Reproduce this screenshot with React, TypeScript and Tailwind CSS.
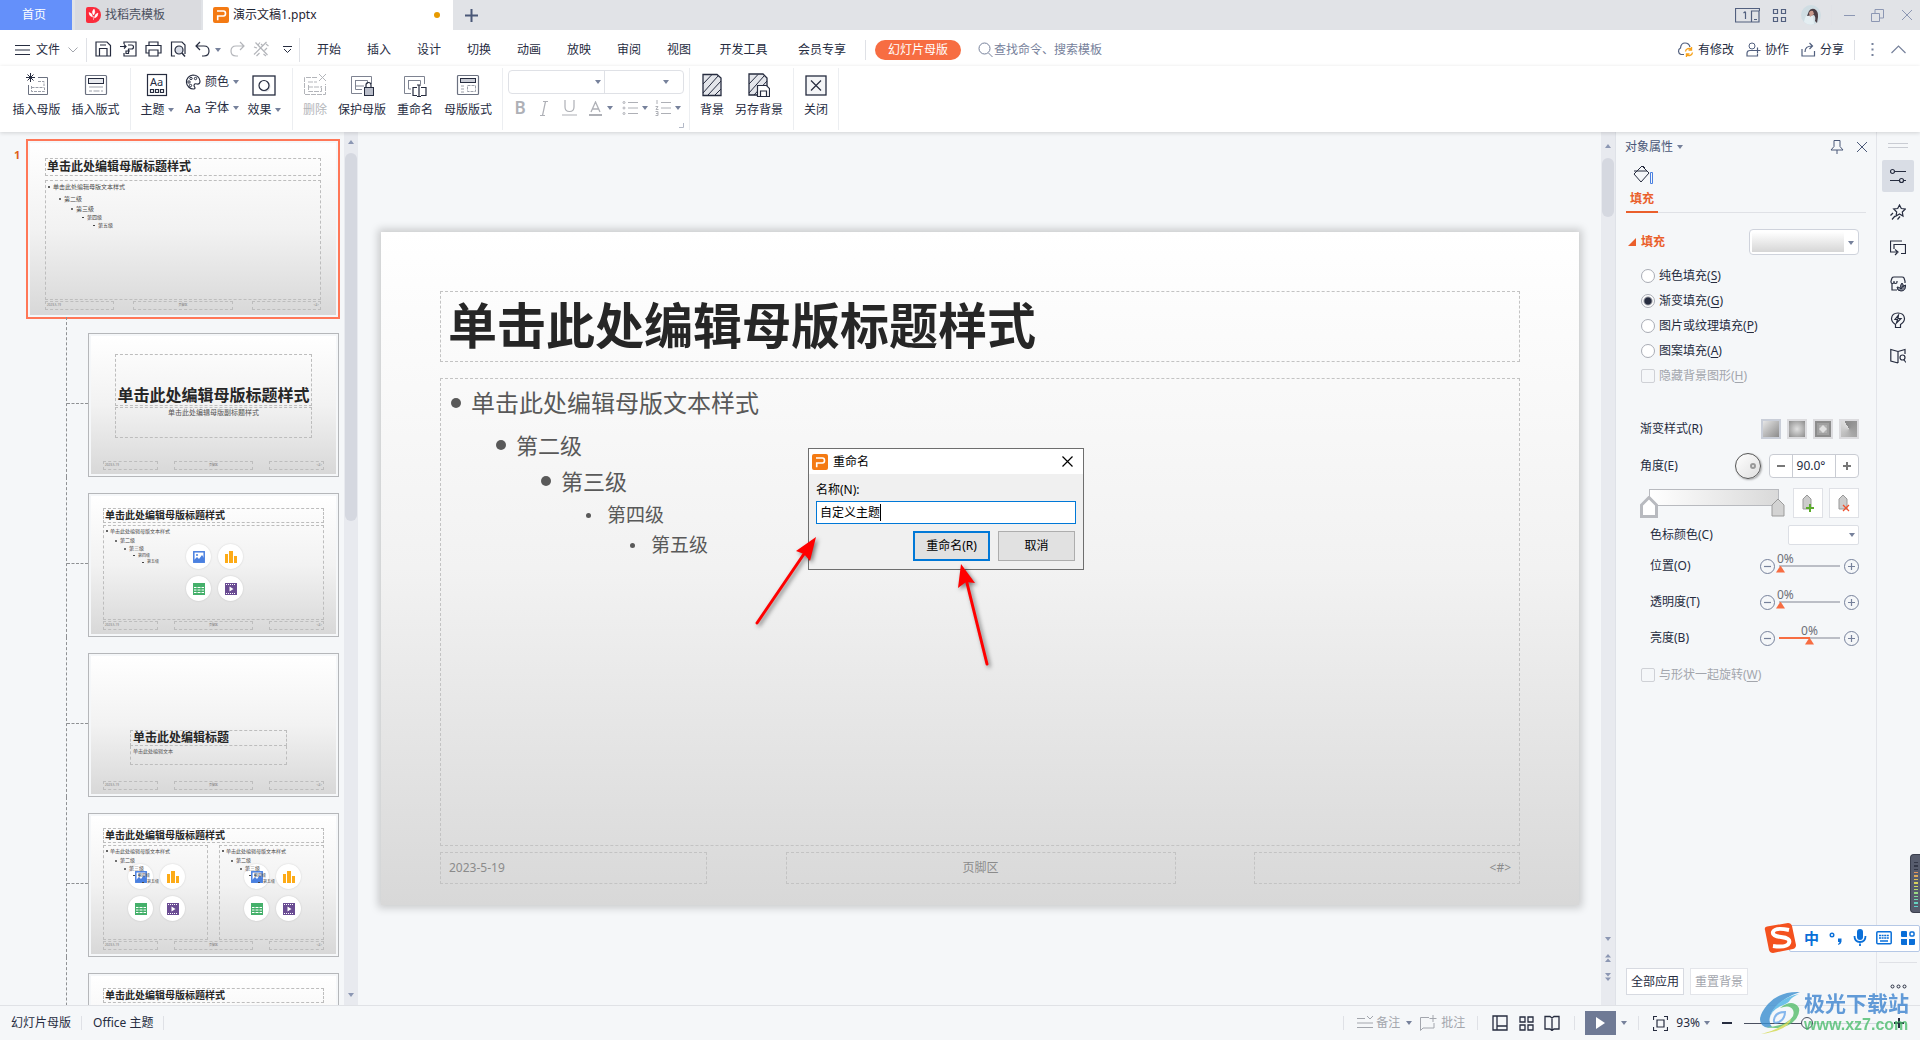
import React, { useState } from 'react';
import clsx from 'clsx';

type IcoProps = { w?: number; h?: number; className?: string; children: React.ReactNode };

function Ico({ w = 16, h = w, className, children }: IcoProps) {
  return (
    <svg width={w} height={h} viewBox={`0 0 ${w} ${h}`} fill="none" stroke="currentColor" className={clsx('shrink-0', className)} aria-hidden="true">
      {children}
    </svg>
  );
}

function Caret({ className = 'text-[#76819b]' }: { className?: string }) {
  return (
    <Ico w={6} h={4} className={className}>
      <path d="M0 0h6L3 4z" fill="currentColor" stroke="none" />
    </Ico>
  );
}

function Sep({ className }: { className?: string }) {
  return <div className={clsx('w-px shrink-0 bg-[#dfe1e6]', className)} />;
}

function WpsLogo() {
  return (
    <Ico className="text-white">
      <rect width="16" height="16" rx="2" fill="#f47a13" stroke="none" />
      <path d="M4 4h6.500Q12.500 4 12.500 6.500T10.500 9H4.700v4.200" strokeWidth="1.600" />
    </Ico>
  );
}

/* ---------- title bar ---------- */

function TitleBar() {
  return (
    <header className="flex h-[30px] shrink-0 items-center bg-[#e1e3e7]">
      <button className="h-full w-[72px] bg-[#6490fa] pr-1 text-white">首页</button>
      <button className="ml-[3px] flex h-full w-[126px] items-center gap-1 bg-[#dadbdf] pl-[11px] text-[#4b5060]">
        <Ico w={15} h={16}>
          <path d="M0 2q0-2 2-2h5a8 8 0 0 1 0 16H2q-2 0-2-2z" fill="#fb2c3c" stroke="none" />
          <path d="M7.500 13V9M7.500 8Q5 5 8 2q2 3-.5 6M6.500 10Q3 9 3 5.500 6.500 6 6.500 10M8.500 11Q8.500 7 12 6q0 4-3.500 5" fill="#fff" stroke="#fff" strokeWidth=".5" />
        </Ico>
        找稻壳模板
      </button>
      <button className="ml-[2px] flex h-full w-[250px] items-center gap-1 bg-white pr-[13px] pl-[10px] text-[#1f2533]">
        <WpsLogo />
        演示文稿1.pptx
        <span className="ml-auto h-[6px] w-[6px] rounded-full bg-[#e79a00]" />
      </button>
      <button className="ml-3 text-[#4a5878]" aria-label="新建">
        <Ico w={13}><path d="M6.500 0v13M0 6.500h13" strokeWidth="2" /></Ico>
      </button>
      <div className="ml-auto flex h-full items-center pr-[7px] text-[#52607f]">
        <button aria-label="窗口布局">
          <Ico w={25} h={15}>
            <path d="M16 14H.5V.5h24V3M10.500 4v7M8.500 5l2-1.500M24 3h-7.500v11H24z" strokeWidth="1.200" />
            <path d="M19 11.500h3" />
          </Ico>
        </button>
        <button className="ml-3" aria-label="应用">
          <Ico w={15}><path d="M1.500 1.500h4v4h-4zM9.500 1.500h4v4h-4zM1.500 9.500h4v4h-4zM9.500 9.500h4v4h-4z" strokeWidth="1.200" /></Ico>
        </button>
        <button className="ml-[14px]" aria-label="账户">
          <Ico w={20}>
            <circle cx="10" cy="10" r="10" fill="#cfdde3" stroke="none" />
            <path d="M3 17q1-7 5-8l4 2 1 8a10 10 0 0 1-10-2" fill="#e4eef2" stroke="none" />
            <path d="M8 6q2-3 5.500-2 4 2 3.500 8l-1 6-2-2q1-4-1-6L6 11z" fill="#4a3d43" stroke="none" />
            <path d="M8 8q1-3 4-2l1 3-4 3z" fill="#c99a8c" stroke="none" />
          </Ico>
        </button>
        <Sep className="mr-[12px] ml-[10px] h-5 bg-[#c8ccd5]" />
        <button className="text-[#8c97b3]" aria-label="最小化"><Ico w={11}><path d="M0 5.500h11" /></Ico></button>
        <button className="ml-4 text-[#8c97b3]" aria-label="还原">
          <Ico w={13}><path d="M.5 4.500h8v8h-8zM4 4V.5h8.500V9H9" /></Ico>
        </button>
        <button className="ml-[17px] text-[#8c97b3]" aria-label="关闭窗口"><Ico w={12}><path d="M1 1l10 10M11 1L1 11" /></Ico></button>
      </div>
    </header>
  );
}

/* ---------- menu row ---------- */

const menus = ['开始', '插入', '设计', '切换', '动画', '放映', '审阅', '视图'];

function MenuBar() {
  return (
    <nav className="flex h-9 shrink-0 items-center bg-white pt-[3px] text-[#262c3f]">
      <button className="ml-[15px] flex items-center gap-[6px]">
        <Ico w={15} h={12}><path d="M0 1.500h15M0 6h15M0 10.500h15" /></Ico>
        文件
        <Ico w={10} h={6} className="ml-[2px] text-[#a3a6ad]"><path d="M.5.5L5 5 9.500.5" /></Ico>
      </button>
      <Sep className="ml-2 h-6" />
      <div className="ml-2 flex items-center">
        <button aria-label="保存">
          <Ico w={17}><path d="M1 1h11l3.500 3.500V15H1zM4.500 15V7.500H12V15M5 4h6" strokeWidth="1.200" /></Ico>
        </button>
        <button className="ml-2" aria-label="输出为PDF">
          <Ico w={17}><path d="M4 3V1h12v14H4v-3M0 5.500h6M4 3.500l2 2-2 2M8 4h3.500q2 0 2 2t-2 2H8M8.500 8v4.500H6V10h4" strokeWidth="1.200" /></Ico>
        </button>
        <button className="ml-2" aria-label="打印">
          <Ico w={17}><path d="M4 4V1h9v3M4 12H1V4.500h15V12h-3M4 9h9v6H4z" strokeWidth="1.200" /></Ico>
        </button>
        <button className="ml-2" aria-label="打印预览">
          <Ico w={17}>
            <path d="M5 15H1.500V1H12l3 3v9" strokeWidth="1.200" />
            <circle cx="9" cy="9" r="4" fill="#d8dce6" strokeWidth="1.200" />
            <path d="M12 12l3 3.500" strokeWidth="1.500" />
          </Ico>
        </button>
        <button className="ml-2 flex items-center gap-[5px]" aria-label="撤销">
          <Ico w={15} h={17}><path d="M5 1L1 5l4 4M1 5h8q5 0 5 5t-5 5H7" strokeWidth="1.200" /></Ico>
          <Caret />
        </button>
        <button className="ml-[9px] text-[#b3b5ba]" disabled aria-label="重做">
          <Ico w={15} h={17}><path d="M10 1l4 4-4 4M14 5H6q-5 0-5 5t5 5h2" strokeWidth="1.200" /></Ico>
        </button>
        <button className="ml-2 text-[#b3b5ba]" disabled aria-label="格式刷">
          <Ico w={17}><path d="M2.500 1.500l12 12.500M1 13.500L13.500 1M3.500 15l3-3M14 7l-2.500 2.500M5 4l2-2.500M1 6l3 1M10.500 13l2.500 2M13 3l2.500 2M8 3l2 2" strokeWidth="1.200" /></Ico>
        </button>
        <button className="ml-[13px]" aria-label="更多">
          <Ico w={9} h={8}><path d="M0 .5h9M1 3l3.500 3.500L8 3" /></Ico>
        </button>
      </div>
      <Sep className="mr-1 ml-[7px] h-6" />
      {menus.map((m) => (
        <button key={m} className="w-[50px]">{m}</button>
      ))}
      <button className="w-[79px]">开发工具</button>
      <button className="w-[78px]">会员专享</button>
      <Sep className="ml-1 h-5" />
      <button className="ml-[9px] h-5 w-[86px] rounded-full bg-[#f76d42] text-white">幻灯片母版</button>
      <button className="ml-[17px] flex items-center gap-px text-[#76819b]">
        <Ico w={15}><circle cx="6.500" cy="6.500" r="5.500" /><path d="M10.500 11l4 4" /></Ico>
        查找命令、搜索模板
      </button>
      <div className="ml-auto flex items-center pr-[14px]">
        <button className="flex items-center gap-1">
          <Ico w={17} className="text-[#52607f]">
            <path d="M7 13.500H4A3.500 3.500 0 0 1 3.500 7Q4 2 8 2t5 4" strokeWidth="1.200" />
            <path d="M8.500 10.500a3.500 3.500 0 0 1 6-2M15.500 11.500a3.500 3.500 0 0 1-6 2M14.500 6v3h-3M9.500 16v-3h3" stroke="#f7a21b" strokeWidth="1.400" />
          </Ico>
          有修改
        </button>
        <button className="ml-3 flex items-center gap-1">
          <Ico w={15} className="text-[#52607f]"><circle cx="6" cy="4" r="3" /><path d="M9 8.500H4q-3 0-3 3V14h10.500v-2M11.500 5.500v6M8.500 8.500h6" strokeWidth="1.200" /></Ico>
          协作
        </button>
        <button className="ml-3 flex items-center gap-1">
          <Ico w={15} className="text-[#52607f]"><path d="M1 7v7h12.500V9M4 10q0-6 7-6M8.500 1l3 3-3 3" strokeWidth="1.200" /></Ico>
          分享
        </button>
        <Sep className="ml-[10px] h-5" />
        <button className="ml-4" aria-label="更多选项">
          <Ico w={3} h={13}><path d="M.5 0h2v2h-2zM.5 5.500h2v2h-2zM.5 11h2v2h-2z" fill="#76819b" stroke="none" /></Ico>
        </button>
        <button className="ml-[17px] text-[#76819b]" aria-label="收起功能区"><Ico w={15} h={9}><path d="M.5 8l7-7 7 7" strokeWidth="1.200" /></Ico></button>
      </div>
    </nav>
  );
}

/* ---------- ribbon ---------- */

function RibbonButton({ label, icon, className, caret, disabled }: { label: string; icon: React.ReactNode; className: string; caret?: boolean; disabled?: boolean }) {
  return (
    <button disabled={disabled} className={clsx('flex flex-col items-center gap-[5px] self-start pt-[7px] whitespace-nowrap disabled:text-[#b3b5ba]', className)}>
      <span className="flex h-6 items-center">{icon}</span>
      <span className="flex items-center gap-[3px] leading-4">
        {label}
        {caret && <Caret />}
      </span>
    </button>
  );
}

function Ribbon() {
  return (
    <div className="relative z-10 flex h-[66px] shrink-0 items-center bg-white text-[#262c3f] shadow-[0_1px_4px_rgba(0,0,0,0.15)]">
      <RibbonButton className="ml-[7px] w-[59px]" label="插入母版" icon={
        <Ico w={24}>
          <path d="M13 4.500h9.500v17h-19V12" stroke="#6b7180" />
          <path d="M13 8.500h6V13M6.500 14.500h13M6.500 13v5.500h13V15" stroke="#9b9fa9" strokeDasharray="3 1" />
          <path d="M5.500 0v9M1 4.500h9M2.500 1.500l6 6M8.500 1.500l-6 6" />
        </Ico>} />
      <RibbonButton className="w-[59px]" label="插入版式" icon={
        <Ico w={24}>
          <rect x="1.500" y="2.500" width="21" height="19" rx="1" stroke="#6b7180" strokeWidth="1.200" />
          <rect x="4.500" y="5.500" width="15" height="5" fill="#e7e9ee" />
          <path d="M5 14h14M5 18h3M9.500 18h6M17 18h2" stroke="#9b9fa9" />
        </Ico>} />
      <Sep className="ml-[5px] h-[62px] bg-[#eceef1]" />
      <RibbonButton className="ml-1 w-[44px]" label="主题" caret icon={
        <Ico w={22} h={24}>
          <rect x="1.500" y="1.500" width="19" height="21" strokeWidth="1.200" />
          <path d="M4.500 16.500h3v3h-3zM9.500 16.500h3v3h-3zM14.500 16.500h3v3h-3z" strokeWidth="1.200" />
          <text x="4" y="13" fontSize="11" fill="currentColor" stroke="none">Aa</text>
        </Ico>} />
      <div className="ml-[6px] flex w-[54px] flex-col gap-[10px] self-start pt-2">
        <button className="flex h-4 items-center gap-1 whitespace-nowrap">
          <Ico>
            <path d="M8 1a7 7 0 1 0 1 14q2-.5 0-3 0-3 3-2 3 .5 3-3Q14 1 8 1z" strokeWidth="1.200" />
            <circle cx="4" cy="8" r="1.200" /><circle cx="6" cy="4.500" r="1.200" /><circle cx="10.500" cy="4.500" r="1.200" /><circle cx="5.500" cy="11.500" r="1.200" />
          </Ico>
          颜色<Caret />
        </button>
        <button className="flex h-4 items-center gap-1 whitespace-nowrap">
          <span className="w-4 text-[13px]">Aa</span>字体<Caret />
        </button>
      </div>
      <RibbonButton className="ml-[5px] w-10" label="效果" caret icon={
        <Ico w={24}>
          <rect x="1" y="3" width="22" height="19" strokeWidth="1.300" />
          <circle cx="13" cy="13.500" r="5.500" fill="#dfe1e6" stroke="none" />
          <circle cx="12" cy="12.500" r="5" fill="#fff" strokeWidth="1.200" />
        </Ico>} />
      <Sep className="ml-2 h-[62px] bg-[#eceef1]" />
      <RibbonButton className="ml-[2px] w-10" label="删除" disabled icon={
        <Ico w={24}><path d="M14 4.500H1.500v17h21V11M5 14h14M5 9h9M5.500 12v6.500h13V13" strokeDasharray="5 1" /><path d="M16 1l7 7M23 1l-7 7" /></Ico>} />
      <RibbonButton className="w-[54px]" label="保护母版" icon={
        <Ico w={24}>
          <path d="M12 20.500H1.500v-17h20V11M5 13h9M5.500 7.500h12V11M5.500 7v9.500H12" stroke="#7e8391" />
          <path d="M16 14v-2q0-2.500 2.500-2.500T21 12v2" strokeWidth="1.200" />
          <rect x="14.500" y="14.500" width="9" height="8" fill="#b9bdc9" />
        </Ico>} />
      <RibbonButton className="w-[52px]" label="重命名" icon={
        <Ico w={24}>
          <path d="M8 20.500H1.500v-17h20V11M5.500 7.500h12V11M5.500 7v9H8" stroke="#7e8391" />
          <path d="M14 14.500H10v8h4M18 14.500h5v8h-5M16 12.500v11M14 12h4M14 23.500h4" strokeWidth="1.200" />
        </Ico>} />
      <RibbonButton className="w-[54px]" label="母版版式" icon={
        <Ico w={24}>
          <rect x="1.500" y="2.500" width="21" height="19" rx="1" stroke="#6b7180" strokeWidth="1.200" />
          <rect x="4.500" y="5.500" width="15" height="4" fill="#c9ccd5" />
          <path d="M5 13h4M5 16h4M5 19h4M11.500 12.500h8v6h-8z" stroke="#9b9fa9" strokeDasharray="3 1" />
        </Ico>} />
      <Sep className="ml-[7px] h-[62px] bg-[#eceef1]" />

      <div className="relative ml-[5px] flex w-44 flex-col gap-1 self-start pt-1">
        <div className="flex h-6 rounded-sm border border-[#dfe1e6]">
          <Combo label="字体" className="flex-1" />
          <Combo label="字号" className="w-[79px] border-l border-[#dfe1e6] [&>svg]:right-[14px]" />
        </div>
        <div className="flex h-5 items-center text-[#aeb0b6]">
          <button className="w-6 text-[17px] leading-5 font-semibold" aria-label="加粗">B</button>
          <button className="w-6" aria-label="倾斜"><Ico w={10} h={15} className="mx-auto"><path d="M4 .5h5M1 14.500h5M6.500 .5l-3 14" strokeWidth="1.200" /></Ico></button>
          <button className="ml-px w-6" aria-label="下划线"><Ico w={15} h={16} className="mx-auto"><path d="M3 0v7q0 4.500 4.500 4.500T12 7V0M0 15h15" strokeWidth="1.200" /></Ico></button>
          <button className="ml-[7px] flex items-center gap-1" aria-label="字体颜色">
            <Ico w={15}><path d="M3 11L7.500 1 12 11M4.500 8h6" strokeWidth="1.300" /><path d="M1 14h13" strokeWidth="2" /></Ico>
            <Caret />
          </button>
          <button className="ml-[9px] flex items-center gap-1" aria-label="项目符号">
            <Ico><path d="M6 2.500h10M6 8h10M6 13.500h10" /><circle cx="2" cy="2.500" r="1" /><circle cx="2" cy="8" r="1" /><circle cx="2" cy="13.500" r="1" /></Ico>
            <Caret />
          </button>
          <button className="ml-[7px] flex items-center gap-1" aria-label="编号">
            <Ico><path d="M6 2.500h10M6 8h10M6 13.500h10M2 0v4M.5 6.500H3L1 9.500h2.500M.5 11.500H3v4H.5M1 13.500h2" /></Ico>
            <Caret />
          </button>
        </div>
        <Ico w={5} className="absolute top-[57px] right-0 text-[#b3b9c7]"><path d="M4.500 0v4.500H0" /></Ico>
      </div>
      <Sep className="ml-[5px] h-[62px] bg-[#eceef1]" />
      <RibbonButton className="ml-1 w-9" label="背景" icon={
        <Ico w={20} h={24}>
          <path d="M1 1.500h14L19 5v17.500H1z" fill="#e4e6eb" strokeWidth="1.300" />
          <path d="M1 11l9-9.500M1 20L16 3M6 22L19 8M13 22l6-6" />
        </Ico>} />
      <RibbonButton className="w-[58px]" label="另存背景" icon={
        <Ico w={22} h={24}>
          <path d="M1 1h14l4 4v17H1z" fill="#e4e6eb" strokeWidth="1.300" />
          <path d="M1 11l9-9.500M1 20L16 3M6 22L19 8" />
          <path d="M9.500 12.500h9l3 3v8h-12zM12.500 23v-5h6v5" fill="#fff" strokeWidth="1.200" />
        </Ico>} />
      <Sep className="ml-[5px] h-[62px] bg-[#eceef1]" />
      <RibbonButton className="w-[44px]" label="关闭" icon={
        <Ico w={22} h={24}><rect x="1" y="3" width="20" height="19" fill="#f4f5f7" strokeWidth="1.300" /><path d="M6 7.500l10 10M16 7.500l-10 10" strokeWidth="1.200" /></Ico>} />
      <Sep className="h-[62px] bg-[#eceef1]" />
    </div>
  );
}

function Combo({ label, className }: { label: string; className?: string }) {
  return (
    <div className={clsx('relative', className)}>
      <select aria-label={label} className="h-full w-full appearance-none bg-transparent outline-none" />
      <Caret className="pointer-events-none absolute top-1/2 right-[3px] -mt-[2px] text-[#76819b]" />
    </div>
  );
}

/* ---------- layout thumbnails ---------- */

const TITLE = '单击此处编辑母版标题样式';
const BODY = '单击此处编辑母版文本样式';
const dashed = 'border border-dashed border-[#bdbdbd]';

function ThumbFooter({ wide }: { wide?: boolean }) {
  return (
    <div className={clsx('flex h-[9px] shrink-0 justify-between text-[3px] leading-[7px] text-[#777]', wide ? 'mt-px' : 'mt-auto')}>
      <div className={clsx(dashed, 'w-1/4 pl-px')}>2023-5-19</div>
      <div className={clsx(dashed, 'w-[36%] text-center')}>页脚区</div>
      <div className={clsx(dashed, 'w-1/4 pr-px text-right')}>&lt;#&gt;</div>
    </div>
  );
}

const levelNames = ['第二级', '第三级', '第四级', '第五级'];
const bigLevels = ['pl-[11px] h-[11px] text-[6px]', 'pl-[23px] h-[9px] text-[6px]', 'pl-[34px] h-[8px] text-[5px]', 'pl-[45px] h-[8px] text-[5px]'];
const smallLevels = ['pl-[9px] h-[9px] text-[5px]', 'pl-[18px] h-[7px] text-[5px]', 'pl-[27px] h-[7px] text-[4px]', 'pl-[36px] h-[6px] text-[4px]'];

function ThumbLevels({ small }: { small?: boolean }) {
  return (
    <ul className="pl-[2px] leading-none text-[#4a4a4a]">
      <li className={clsx('flex items-center', small ? 'h-[10px] gap-[2px] text-[5px]' : 'h-[12px] gap-[3px] text-[6px]')}>
        <i className="h-[2px] w-[2px] rounded-full bg-[#333]" />{BODY}
      </li>
      {levelNames.map((name, i) => (
        <li key={name} className={clsx('flex items-center gap-[3px]', small ? smallLevels[i] : bigLevels[i])}>
          <i className={clsx('w-[2px] bg-[#444]', i < 2 ? 'h-[2px] rounded-full' : 'h-px')} />{name}
        </li>
      ))}
    </ul>
  );
}

function ContentIcons() {
  const circle = 'flex h-[25px] w-[25px] items-center justify-center rounded-full bg-white shadow-[0_0_2px_rgba(0,0,0,0.15)]';
  return (
    <div className="absolute inset-0 grid grid-cols-[25px_25px] place-content-center gap-[7px] pl-[2px]">
      <span className={circle}><Ico w={12}><rect x=".8" y=".8" width="10.400" height="10.400" stroke="#4a80e0" strokeWidth="1.500" fill="#fff" /><path d="M1 11V9l3-3 2 2 3-4 2 3v4z" fill="#4a80e0" stroke="none" /><circle cx="4" cy="4" r="1" fill="#4a80e0" stroke="none" /></Ico></span>
      <span className={circle}><Ico w={12}><path d="M0 3h3v9H0zM4 0h4v12H4zM9 5h3v7H9z" fill="#fdab17" stroke="none" /></Ico></span>
      <span className={circle}><Ico w={12}><rect width="12" height="12" fill="#45b06b" stroke="none" /><path d="M1 4.500h10M1 7h10M1 9.500h10" stroke="#fff" /><path d="M4 3v9M8 3v9" stroke="#45b06b" /></Ico></span>
      <span className={circle}><Ico w={12}><rect width="12" height="12" fill="#6a4c93" stroke="none" /><path d="M1 1.500h10M1 10.500h10" stroke="#fff" strokeDasharray="1 1" /><path d="M4.500 3.500v5l4-2.500z" fill="#fff" stroke="none" /></Ico></span>
    </div>
  );
}

function LayoutThumb({ children, label }: { children: React.ReactNode; label: string }) {
  return (
    <div className="flex h-40 shrink-0">
      <div className="ml-[66px] w-[22px] border-l border-dashed border-[#8f9194]">
        <div className="mt-[86px] border-t border-dashed border-[#8f9194]" />
      </div>
      <button aria-label={label} className="mt-4 h-36 flex-1 border border-[#b5b7ba] p-[2px] text-left">
        <div className="flex h-full flex-col bg-linear-to-b from-white via-[#f2f2f2] to-[#d8d8d8] p-3 pb-1">{children}</div>
      </button>
    </div>
  );
}

function ThumbTitle() {
  return <div className={clsx(dashed, 'h-[15px] shrink-0 pl-px text-[10px] leading-3 font-bold text-[#262626]')}>{TITLE}</div>;
}

function ThumbPane() {
  return (
    <aside className="flex w-[358px] shrink-0 bg-[#f5f7f9]">
      <div className="flex flex-1 flex-col overflow-hidden pr-1">
        <div className="flex shrink-0 pt-[7px]">
          <span className="w-[26px] pt-[8px] pl-[14px] text-[11px] leading-4 font-bold text-[#e0611a]">1</span>
          <button aria-label="Office 主题 母版" className="h-[180px] flex-1 border-2 border-[#ff7757] p-[2px] text-left">
            <div className="flex h-full flex-col bg-linear-to-b from-white via-[#f2f2f2] to-[#d8d8d8] px-[15px] pt-[15px] pb-[5px]">
              <div className={clsx(dashed, 'h-[18px] shrink-0 pl-px text-[12px] leading-4 font-bold text-[#262626]')}>{TITLE}</div>
              <div className={clsx(dashed, 'mt-1 flex-1')}><ThumbLevels /></div>
              <ThumbFooter wide />
            </div>
          </button>
        </div>
        <div className="-mt-[2px] flex min-h-0 flex-1 flex-col overflow-hidden pr-px">
          <LayoutThumb label="标题幻灯片 版式">
            <div className={clsx(dashed, 'mx-3 mt-[6px] flex h-[52px] shrink-0 items-end justify-center text-[16px] leading-5 font-bold whitespace-nowrap text-[#262626]')}>{TITLE}</div>
            <div className={clsx(dashed, 'mx-3 mt-px h-[31px] shrink-0 text-center text-[7px] leading-[10px] text-[#555]')}>单击此处编辑母版副标题样式</div>
            <ThumbFooter />
          </LayoutThumb>
          <LayoutThumb label="标题和内容 版式">
            <ThumbTitle />
            <div className={clsx(dashed, 'relative mt-[2px] flex-1')}><ThumbLevels small /><ContentIcons /></div>
            <ThumbFooter wide />
          </LayoutThumb>
          <LayoutThumb label="节标题 版式">
            <div className="mt-auto ml-[27px] w-[157px]">
              <div className={clsx(dashed, 'h-4 pl-[2px] text-[12px] leading-[14px] font-bold text-[#262626]')}>单击此处编辑标题</div>
              <div className={clsx(dashed, 'h-[19px] border-t-0 pl-[2px] text-[5px] leading-[10px] text-[#555]')}>单击此处编辑文本</div>
            </div>
            <div className="mt-4 flex flex-col"><ThumbFooter /></div>
          </LayoutThumb>
          <LayoutThumb label="两栏内容 版式">
            <ThumbTitle />
            <div className="mt-[2px] flex flex-1 gap-[11px]">
              <div className={clsx(dashed, 'relative flex-1')}><ContentIcons /><div className="relative"><ThumbLevels small /></div></div>
              <div className={clsx(dashed, 'relative flex-1')}><ContentIcons /><div className="relative"><ThumbLevels small /></div></div>
            </div>
            <ThumbFooter wide />
          </LayoutThumb>
          <LayoutThumb label="比较 版式">
            <ThumbTitle />
            <div className={clsx(dashed, 'mt-[2px] flex-1')} />
          </LayoutThumb>
        </div>
      </div>
      <div className="flex w-[14px] flex-col items-center bg-[#e8eaef] py-2 text-[#8c97b3]">
        <Ico w={6} h={4}><path d="M0 4h6L3 0z" fill="currentColor" stroke="none" /></Ico>
        <div className="mt-[9px] h-[368px] w-3 rounded-full bg-[#d5d8e0]" />
        <Caret className="mt-auto text-[#8c97b3]" />
      </div>
    </aside>
  );
}

/* ---------- slide ---------- */

function Slide() {
  const box = 'border border-dashed border-[#c3c3c3]';
  return (
    <main className="flex min-w-0 flex-1 items-center bg-[#f5f7f9] pr-[22px] pl-[23px]">
      <section className="flex aspect-[1198/673] w-full flex-col bg-linear-to-b from-white via-[#f2f2f2] to-[#d8d8d8] px-[59px] pt-[59px] pb-[21px] text-[#595959] shadow-[0_0_8px_3px_rgba(0,0,0,0.18)]">
        <h1 className={clsx(box, 'h-[71px] shrink-0 pl-[7px] text-[49px] leading-[66px] font-bold text-[#262626]')}>{TITLE}</h1>
        <ul className={clsx(box, 'mt-4 flex-1 pt-[6px] pl-[10px]')}>
          <li className="flex h-9 items-center gap-[10px] text-[24px]"><i className="h-[10px] w-[10px] rounded-full bg-[#595959]" />{BODY}</li>
          <li className="mt-[6px] ml-[45px] flex h-9 items-center gap-[10px] text-[22px]"><i className="h-[10px] w-[10px] rounded-full bg-[#595959]" />第二级</li>
          <li className="ml-[90px] flex h-9 items-center gap-[10px] text-[22px]"><i className="h-[10px] w-[10px] rounded-full bg-[#595959]" />第三级</li>
          <li className="ml-[135px] flex h-8 items-center gap-4 text-[19px]"><i className="h-[5px] w-[5px] rounded-full bg-[#595959]" />第四级</li>
          <li className="ml-[179px] flex h-7 items-center gap-4 text-[19px]"><i className="h-[5px] w-[5px] rounded-full bg-[#595959]" />第五级</li>
        </ul>
        <div className="mt-[6px] flex h-8 shrink-0 justify-between text-[12px] leading-[30px] text-[#8b8b8b]">
          <div className={clsx(box, 'w-[267px] pl-2')}>2023-5-19</div>
          <div className={clsx(box, 'w-[390px] text-center')}>页脚区</div>
          <div className={clsx(box, 'w-[266px] pr-2 text-right')}>&lt;#&gt;</div>
        </div>
      </section>
    </main>
  );
}

function SlideScroll() {
  return (
    <div className="flex w-[15px] shrink-0 flex-col items-center border-r border-[#dfe2e8] bg-[#e8eaef] pt-3 pb-6 text-[#8c97b3]">
      <Ico w={6} h={4}><path d="M0 4h6L3 0z" fill="currentColor" stroke="none" /></Ico>
      <div className="mt-[10px] mb-auto h-[59px] w-3 rounded-full bg-[#d5d8e0]" />
      <Caret className="text-[#8c97b3]" />
      <Ico w={6} h={8} className="mt-[13px]"><path d="M0 3.500h6L3 0zM0 8h6L3 4.500z" fill="currentColor" stroke="none" /></Ico>
      <Ico w={6} h={8} className="mt-[11px]"><path d="M0 0h6L3 3.500zM0 4.500h6L3 8z" fill="currentColor" stroke="none" /></Ico>
    </div>
  );
}

/* ---------- properties panel ---------- */

const fills = [
  { text: '纯色填充', key: 'S' },
  { text: '渐变填充', key: 'G' },
  { text: '图片或纹理填充', key: 'P' },
  { text: '图案填充', key: 'A' },
];

function CircleButton({ plus, label }: { plus?: boolean; label: string }) {
  return (
    <button aria-label={label} className="text-[#76819b]">
      <Ico w={15}><circle cx="7.500" cy="7.500" r="7" /><path d={plus ? 'M4 7.500h7M7.500 4v7' : 'M4 7.500h7'} strokeWidth="1.200" /></Ico>
    </button>
  );
}

function SliderRow({ id, label, half }: { id: string; label: string; half?: boolean }) {
  return (
    <div className="flex h-9 items-center pl-[34px]">
      <label htmlFor={id} className="flex-1">{label}</label>
      <CircleButton label="减小" />
      <div className={clsx('relative mx-1 h-[2px] w-[61px]', half ? 'bg-[linear-gradient(90deg,#f76d42_50%,#bbbec6_50%)]' : 'bg-[#bbbec6]')}>
        <span className={clsx('absolute bottom-0 text-[#6d7078]', half ? 'inset-x-0 text-center' : '-left-[2px]')}>0%</span>
        <input
          id={id}
          type="range"
          defaultValue={half ? 50 : 0}
          className="absolute top-0 -left-[3px] h-2 w-[67px] appearance-none bg-transparent [&::-webkit-slider-thumb]:h-[7px] [&::-webkit-slider-thumb]:w-[9px] [&::-webkit-slider-thumb]:appearance-none [&::-webkit-slider-thumb]:bg-[#f76d42] [&::-webkit-slider-thumb]:[clip-path:polygon(50%_0,100%_100%,0_100%)]"
        />
      </div>
      <CircleButton plus label="增大" />
    </div>
  );
}

const checkbox = 'h-[14px] w-[14px] appearance-none rounded-xs border border-[#cfd1d6]';

function PropsPanel() {
  const [fill, setFill] = useState('G');
  return (
    <aside className="flex w-[261px] shrink-0 flex-col border-r border-[#e3e5ea] bg-[#f5f7f9] pr-[17px] text-[#262c3f]">
      <div className="-mr-[9px] flex h-[29px] shrink-0 items-center pt-px pl-[9px] text-[#4a5878]">
        <button className="flex items-center gap-1">对象属性<Caret /></button>
        <button className="ml-auto" aria-label="固定"><Ico w={14}><path d="M4 .5h6v6l3 3.500H1l3-3.500zM7 10v4" /></Ico></button>
        <button className="ml-3" aria-label="关闭面板"><Ico w={12}><path d="M1 1l10 10M11 1L1 11" /></Ico></button>
      </div>
      <div className="-mr-[7px] ml-[10px] shrink-0 border-b border-[#dfe1e6]">
        <button className="-mb-px block w-8 border-b-2 border-[#ea5f2c] pt-1 font-bold text-[#ea5f2c]">
          <Ico w={20} className="ml-[7px] text-[#262c3f]">
            <path d="M1 6h13M9 1l7 7-8 9-7-8 8-8M10 1l2 2" />
            <path d="M17.500 7.500h2v11h-2z" stroke="#4a80e0" />
          </Ico>
          <span className="block pt-px leading-[25px]">填充</span>
        </button>
      </div>

      <div className="mt-4 flex h-[26px] shrink-0 items-center pl-3">
        <button className="flex items-center gap-[5px] font-bold text-[#ea5f2c]">
          <Ico w={8}><path d="M8 0v8H0z" fill="currentColor" stroke="none" /></Ico>
          填充
        </button>
        <div className="relative ml-auto h-full w-[110px] rounded-sm border border-[#cfd3dc] bg-white p-[2px]">
          <select aria-label="填充预设" className="block h-5 w-[92px] appearance-none bg-linear-to-b from-white to-[#d6d6d6]" />
          <Caret className="absolute top-[11px] right-1 text-[#76819b]" />
        </div>
      </div>

      <div className="mt-2 pl-[25px]">
        {fills.map((f) => (
          <label key={f.key} className="flex h-[25px] items-center gap-1">
            <input
              type="radio"
              name="fill"
              checked={fill === f.key}
              onChange={() => setFill(f.key)}
              className="h-[14px] w-[14px] appearance-none rounded-full border border-[#a9acb5] bg-white checked:bg-[radial-gradient(circle,#262c3f_3px,#fff_5px)]"
            />
            <span>{f.text}(<u className="underline-offset-2">{f.key}</u>)</span>
          </label>
        ))}
        <label className="flex h-[25px] items-center gap-1 text-[#a3a6ad]">
          <input type="checkbox" disabled className={checkbox} />
          <span>隐藏背景图形(<u className="underline-offset-2">H</u>)</span>
        </label>
      </div>

      <div className="mt-[31px] flex h-5 items-center gap-[6px] pl-6">
        <span className="flex-1">渐变样式(R)</span>
        <button aria-label="线性渐变" className="h-5 w-5 border-2 border-[#c9ced8] bg-linear-to-br from-[#e6e6e6] to-[#8c8c8c]" />
        <button aria-label="射线渐变" className="h-5 w-5 border-2 border-[#dcdcdf] bg-[radial-gradient(circle,#e0e0e0,#8c8c8c)]" />
        <button aria-label="矩形渐变" className="h-5 w-5 border-2 border-[#dcdcdf] bg-[#8c8c8c]">
          <Ico><path d="M3 3h10v10H3z" fill="#b0b0b0" stroke="#a0a0a0" strokeWidth="2" /><path d="M8 4l4 4-4 4-4-4z" fill="#e0e0e0" stroke="none" /></Ico>
        </button>
        <button aria-label="路径渐变" className="h-5 w-5 border-2 border-[#dcdcdf] bg-[conic-gradient(from_-30deg,#888,#a8a8a8_50%,#dedede)]" />
      </div>

      <div className="mt-[14px] flex h-[26px] items-center pl-6">
        <label htmlFor="angle" className="flex-1">角度(E)</label>
        <button aria-label="角度旋钮" className="relative h-[26px] w-[26px] rounded-full border border-[#555] bg-linear-to-br from-white to-[#dfdfdf] shadow-[1px_1px_2px_rgba(0,0,0,0.3)]">
          <span className="absolute top-[9px] right-1 h-[6px] w-[6px] rounded-full border-2 border-[#999]" />
        </button>
        <div className="ml-2 flex h-[24px] w-[90px] rounded-sm border border-[#c9ccd3] bg-white text-[#777]">
          <button className="flex w-[23px] items-center justify-center border-r border-[#c9ccd3]" aria-label="减小角度"><Ico w={8}><path d="M0 4h8" strokeWidth="2" /></Ico></button>
          <input id="angle" type="text" defaultValue="90.0°" className="w-[42px] pr-[6px] text-center text-[#262c3f] outline-none" />
          <button className="flex flex-1 items-center justify-center border-l border-[#c9ccd3]" aria-label="增大角度"><Ico w={8}><path d="M0 4h8M4 0v8" strokeWidth="2" /></Ico></button>
        </div>
      </div>

      <div className="mt-[9px] flex h-[30px] pl-6">
        <div className="relative mr-auto w-[145px]">
          <div className="mt-px ml-[9px] h-[17px] w-[130px] border border-[#b8babf] bg-linear-to-r from-white to-[#d9d9d9]" />
          <button className="absolute top-2 left-0" aria-label="停止点 1"><Ico w={18} h={22}><path d="M1.500 20.500V9L9 1.500 16.500 9v11.500z" fill="#fff" stroke="#b8babf" strokeWidth="3" /></Ico></button>
          <button className="absolute top-[10px] right-0" aria-label="停止点 2"><Ico w={14} h={19}><path d="M1 18V7l6-6 6 6v11z" fill="#d3d3d3" stroke="#9b9b9b" /></Ico></button>
        </div>
        <button className="flex w-[30px] items-center justify-center border border-[#dfe1e6] bg-white" aria-label="添加停止点">
          <Ico w={14} h={18}><path d="M2 15V5l4-4 4 4v10z" fill="#ccc" stroke="#999" /><path d="M9 10v8M5 14h8" stroke="#5cab2d" strokeWidth="2" /></Ico>
        </button>
        <button className="ml-[6px] flex w-[30px] items-center justify-center border border-[#dfe1e6] bg-white" aria-label="删除停止点">
          <Ico w={14} h={18}><path d="M2 15V5l4-4 4 4v10z" fill="#ccc" stroke="#999" /><path d="M6 11l6 6M12 11l-6 6" stroke="#f0512d" strokeWidth="1.300" /></Ico>
        </button>
      </div>

      <div className="mt-[7px] flex h-5 items-center pl-[34px]">
        <span className="flex-1">色标颜色(C)</span>
        <Combo label="色标颜色" className="h-5 w-[71px] rounded-xs border border-[#dcdfe5] bg-white" />
      </div>

      <div className="mt-[3px]">
        <SliderRow id="pos" label="位置(O)" />
        <SliderRow id="alpha" label="透明度(T)" />
        <SliderRow id="bright" label="亮度(B)" half />
      </div>

      <label className="mt-[6px] flex h-[25px] items-center gap-1 pl-[25px] text-[#a3a6ad]">
        <input type="checkbox" disabled className={checkbox} />
        <span>与形状一起旋转(<u className="underline-offset-2">W</u>)</span>
      </label>

      <div className="mt-auto mb-[10px] flex gap-[6px] pl-[10px]">
        <button className="h-[27px] w-[58px] border border-[#d7dae1] bg-white whitespace-nowrap">全部应用</button>
        <button disabled className="h-[27px] w-[58px] border border-[#e3e5ea] bg-white whitespace-nowrap text-[#a3a6ad]">重置背景</button>
      </div>
    </aside>
  );
}

function Rail() {
  const btn = 'flex h-8 w-8 items-center justify-center rounded-xs';
  return (
    <div className="flex w-[43px] shrink-0 flex-col items-center bg-[#f5f7f9] pt-[11px] pr-px text-[#262c3f]">
      <div className="h-[5px] w-5 shrink-0 border-y border-[#c9ccd3]" />
      <div className="mt-3 flex flex-col gap-1">
        <button className={clsx(btn, 'bg-[#d9dde5]')} aria-label="对象属性">
          <Ico><circle cx="2.500" cy="3.500" r="2" strokeWidth="1.200" /><path d="M5 3.500h11M0 12.500h9M14 12.500h2" strokeWidth="1.200" /><circle cx="11.500" cy="12.500" r="2" strokeWidth="1.200" /></Ico>
        </button>
        <button className={btn} aria-label="动画">
          <Ico><path d="M9.500 1l1.800 3.500 4 .5-3 3 .7 4-3.500-2-3.500 2 .7-4-3-3 4-.5zM3 9l-2.500 2.500M5 12l-3 3.500M10 12.500L7.500 15.500" strokeWidth="1.200" /></Ico>
        </button>
        <button className={btn} aria-label="切换">
          <Ico><path d="M12 1H.5v11H7M4 9V4.500h11.500v9H11M5 9.500l3 2.500-3 3" strokeWidth="1.200" /></Ico>
        </button>
        <button className={btn} aria-label="稻壳资源">
          <Ico>
            <path d="M7 14H2V7.500M1 5l1-3q.5-1 2-1h8q1.500 0 2 1l1 3v2M1 5v1q0 1.500 1.500 1.500T4 6V5M4 6q0 1.500 1.500 1.500T7 6V5" strokeWidth="1.200" />
            <path d="M11 15q-4 0-4-4 3 0 4 2 1-3 4.500-4 .5 6-4.500 6M11 13q-1.500-4 1-6 2 2 1 4" fill="#7e8391" />
          </Ico>
        </button>
        <button className={btn} aria-label="灵感">
          <Ico><path d="M5.500 12.500Q1.500 10 1.500 6.500 2 1 8 1t6.500 5.500q0 3.500-4 6v3h-5zM8.500 3L5 7.500h2.500l-1 3.500L11 6.500H8z" strokeWidth="1.200" /></Ico>
        </button>
        <button className={btn} aria-label="查找">
          <Ico><path d="M8 3.500L.8 1.500v11.500L8 15M8 3.500l7-2V6M8 3v12" strokeWidth="1.200" /><circle cx="12.500" cy="9.500" r="2.500" strokeWidth="1.200" /><path d="M14 12l2 2.500" strokeWidth="1.200" /></Ico>
        </button>
      </div>
      <div className="mt-auto h-px w-[38px] shrink-0 bg-[#dfe1e6]" />
      <button className="mt-[21px] mb-4" aria-label="更多工具">
        <Ico w={17} h={5}><circle cx="2.500" cy="2.500" r="1.500" /><circle cx="8.500" cy="2.500" r="1.500" /><circle cx="14.500" cy="2.500" r="1.500" /></Ico>
      </button>
    </div>
  );
}

/* ---------- status bar ---------- */

function StatusBar() {
  return (
    <footer className="flex h-[35px] shrink-0 items-center border-t border-[#e0e2e6] bg-[#f5f7f9] text-[#262c3f]">
      <span className="ml-[11px]">幻灯片母版</span>
      <Sep className="ml-[10px] h-[14px]" />
      <span className="ml-[11px]">Office 主题</span>
      <Sep className="ml-[10px] h-[14px]" />
      <div className="ml-auto flex items-center">
        <Sep className="h-[14px]" />
        <button disabled className="ml-[13px] flex items-center gap-[2px] text-[#a3a6ad]">
          <Ico w={17}><path d="M0 3.500h8M10 1l3 3 3-3M0 8h16M0 12.500h16" /></Ico>
          备注<span className="w-[2px]" /><Caret />
        </button>
        <button disabled className="ml-2 flex items-center gap-1 text-[#a3a6ad]">
          <Ico w={17}><path d="M9 2.500H.5v13L3 13h11V8M13 0v7M9.500 3.500h7" /></Ico>
          批注
        </button>
        <Sep className="ml-3 h-[14px]" />
        <button className="ml-[14px]" aria-label="普通视图"><Ico><path d="M1 1h14v14H1zM5 1v14M5 11h10" strokeWidth="1.300" /></Ico></button>
        <button className="ml-[11px]" aria-label="幻灯片浏览"><Ico w={15}><path d="M1 1h5v5H1zM9 1h5v5H9zM1 9h5v5H1zM9 9h5v5H9z" strokeWidth="1.300" /></Ico></button>
        <button className="ml-[10px]" aria-label="阅读视图"><Ico><path d="M1 1.500h5l2 1.500 2-1.500h5V14h-5l-2 1.500L6 14H1zM8 3v12" strokeWidth="1.300" /></Ico></button>
        <Sep className="ml-[14px] h-[14px]" />
        <button className="ml-[10px] flex h-6 w-[31px] items-center justify-center bg-[#6f7a95]" aria-label="放映">
          <Ico w={9} h={12}><path d="M0 0l9 6-9 6z" fill="#fff" stroke="none" /></Ico>
        </button>
        <button className="ml-[5px]" aria-label="放映选项"><Caret /></button>
        <Sep className="ml-[11px] h-[14px]" />
        <button className="ml-[14px]" aria-label="适应窗口"><Ico w={15}><path d="M.5 4V.5H4M11 .5h3.500V4M14.500 11v3.500H11M4 14.500H.5V11M4 4h7v7H4z" strokeWidth="1.200" /></Ico></button>
        <button className="ml-2 flex items-center gap-1">93%<Caret /></button>
        <button className="ml-3" aria-label="缩小"><Ico w={10}><path d="M0 5h10" strokeWidth="2" /></Ico></button>
        <input
          type="range"
          aria-label="缩放"
          defaultValue={44}
          className="ml-3 h-3 w-[142px] appearance-none bg-[linear-gradient(90deg,#4a5060_44%,#d5d8e0_44%)] bg-[length:100%_1px] bg-center bg-no-repeat [&::-webkit-slider-thumb]:h-3 [&::-webkit-slider-thumb]:w-3 [&::-webkit-slider-thumb]:appearance-none [&::-webkit-slider-thumb]:rounded-full [&::-webkit-slider-thumb]:border [&::-webkit-slider-thumb]:border-[#4a5060] [&::-webkit-slider-thumb]:bg-[#f5f7f9]"
        />
        <button className="mr-4 ml-2" aria-label="放大"><Ico w={10}><path d="M0 5h10M5 0v10" strokeWidth="2" /></Ico></button>
      </div>
    </footer>
  );
}

/* ---------- floating windows ---------- */

function RenameDialog() {
  const [name, setName] = useState('自定义主题');
  return (
    <div role="dialog" aria-label="重命名" className="absolute top-[448px] left-[808px] z-20 w-[276px] border border-[#6e6e6e] bg-[#f0f0f0] text-black">
      <div className="flex h-[25px] items-center gap-[5px] bg-white pr-[10px] pl-[3px]">
        <WpsLogo />
        重命名
        <button className="ml-auto" aria-label="关闭对话框"><Ico w={11}><path d="M.5.5l10 10M10.500.5l-10 10" strokeWidth="1.200" /></Ico></button>
      </div>
      <div className="px-[7px] pt-2 pb-2">
        <label htmlFor="theme-name" className="block h-[19px] leading-4">名称(N):</label>
        <div className="flex h-[23px] items-center border border-[#0078d7] bg-white pl-[3px]">
          <input id="theme-name" size={10} value={name} onChange={(e) => setName(e.target.value)} className="w-[60px] outline-none" />
          <span className="h-[17px] w-px bg-black" />
        </div>
        <div className="mt-[7px] flex justify-end gap-2 pr-px">
          <button className="h-[30px] w-[77px] border-2 border-[#0078d7] bg-[#e1e1e1]">重命名(R)</button>
          <button className="h-[30px] w-[77px] border border-[#adadad] bg-[#e1e1e1]">取消</button>
        </div>
      </div>
    </div>
  );
}

function Arrows() {
  return (
    <svg width="250" height="140" viewBox="0 0 250 140" aria-hidden="true" className="pointer-events-none absolute top-[534px] left-[750px] z-30 drop-shadow-[2px_2px_2px_rgba(0,0,0,0.5)]">
      <path d="M7 89L56 17" stroke="#f00" strokeWidth="3" strokeLinecap="round" />
      <path d="M66 3L60 27 54 20 46 17z" fill="#f00" />
      <path d="M237 130L216 45" stroke="#f00" strokeWidth="3" strokeLinecap="round" />
      <path d="M211 30L225 49 216 48 208 54z" fill="#f00" />
    </svg>
  );
}

function InputMethodBar() {
  return (
    <div className="absolute top-[922px] right-0 z-30 flex items-center text-[#0a6fd8]">
      <Ico w={34} h={32} className="z-10 -mr-2">
        <path d="M2 8Q1 5 4 4.500L25 1q3 0 4 3l4 19q0 3-3 4L10 31q-3 0-4-3z" fill="#f4511e" stroke="none" />
        <path d="M26 8Q12 5 10 10q-1 4 8 5 10 1 8 6-2 5-16 3" stroke="#fff" strokeWidth="4" />
      </Ico>
      <div className="flex h-[27px] items-center gap-[9px] rounded-xs border border-[#b5c8e6] bg-white pr-1 pl-[14px]">
        <button className="text-[15px] leading-5 font-bold">中</button>
        <button aria-label="标点"><Ico><circle cx="4" cy="5" r="1.800" strokeWidth="1.400" /><path d="M10 8.500h3.500v3q0 2-3 3.500l-.5-1q1.500-1 1.500-2H10z" fill="currentColor" stroke="none" /></Ico></button>
        <button aria-label="语音"><Ico w={14} h={18}><rect x="4" y="0" width="6" height="11" rx="3" fill="currentColor" stroke="none" /><path d="M1.500 7q0 6 5.500 6t5.500-6M7 14.500v2.500" strokeWidth="1.800" /></Ico></button>
        <button aria-label="软键盘"><Ico w={16} h={14}><rect x=".8" y=".8" width="14.400" height="12" rx="1" strokeWidth="1.500" /><path d="M3 4.500h10M3 7h10" strokeWidth="1.500" strokeDasharray="2 .6" /><path d="M4 10h8" strokeWidth="1.500" /></Ico></button>
        <button aria-label="工具箱"><Ico w={14}><path d="M0 1q0-1 1-1h4q1 0 1 1v5H1Q0 6 0 5zM0 8h6v6H1q-1 0-1-1zM8 8h6v5q0 1-1 1H8z" fill="currentColor" stroke="none" /><rect x="9" y="1" width="4" height="4" rx="1" strokeWidth="1.500" /></Ico></button>
      </div>
    </div>
  );
}

function LevelMeter() {
  const bars = ['#333747', '#333747', '#333747', '#e3955c', '#e0a95a', '#dcc058', '#d8d45c', '#cfdc64', '#b4dc70', '#9cdc82', '#86dc98', '#74d8ae', '#66d4c0', '#60cfcb'];
  return (
    <div className="absolute top-[854px] right-0 z-30 flex h-[59px] w-[10px] flex-col items-end gap-[2px] rounded-l-sm border border-r-0 border-[#3b3f4e] bg-[#575c6d] pt-[7px] pr-[2px]">
      {bars.map((c, i) => (
        <div key={i} className="h-px w-1 shrink-0 grow" style={{ background: c }} />
      ))}
      <div className="h-[3px] shrink-0" />
    </div>
  );
}

function Watermark() {
  return (
    <div className="pointer-events-none absolute right-[11px] bottom-[5px] z-30 flex items-center gap-[2px] opacity-80">
      <Ico w={44} h={44}>
        <path d="M42 1Q22 0 10 13-2 27 4 34q4 4 10 2Q9 30 14 21 22 8 42 1z" fill="#3b8fd0" stroke="none" />
        <path d="M41 3Q30 5 21 12q-9 8-9 17 0-9 11-14 8-3 9-6 2-3 9-6z" fill="#4db4e6" stroke="none" />
        <path d="M22 17q10-4 13 2 3 7-8 13-8 4-19 4 20 4 30-8 7-11-1-15-6-3-15 4z" fill="#56bd6b" stroke="none" />
        <path d="M27 21q-10 0-11 8-1 4 5 2 6-3 6-10z" stroke="#69a7ea" strokeWidth="2" />
        <path d="M3 43q20-5 30-15-2 11-30 15" fill="#d3d94c" stroke="none" />
      </Ico>
      <div>
        <div className="text-[21px] leading-6 font-bold text-[#3d84cf]">极光下载站</div>
        <div className="font-['Liberation_Sans'] text-[16px] leading-5 font-bold text-[#4cbd6e]">www.xz7.com</div>
      </div>
    </div>
  );
}

export default function App() {
  return (
    <div className="relative flex h-screen flex-col overflow-hidden bg-[#f5f7f9] font-['Noto_Sans','Noto_Sans_CJK_SC',sans-serif] text-[12px] leading-4">
      <TitleBar />
      <MenuBar />
      <Ribbon />
      <div className="flex min-h-0 flex-1">
        <ThumbPane />
        <Slide />
        <SlideScroll />
        <PropsPanel />
        <Rail />
      </div>
      <StatusBar />
      <RenameDialog />
      <Arrows />
      <LevelMeter />
      <InputMethodBar />
      <Watermark />
    </div>
  );
}
